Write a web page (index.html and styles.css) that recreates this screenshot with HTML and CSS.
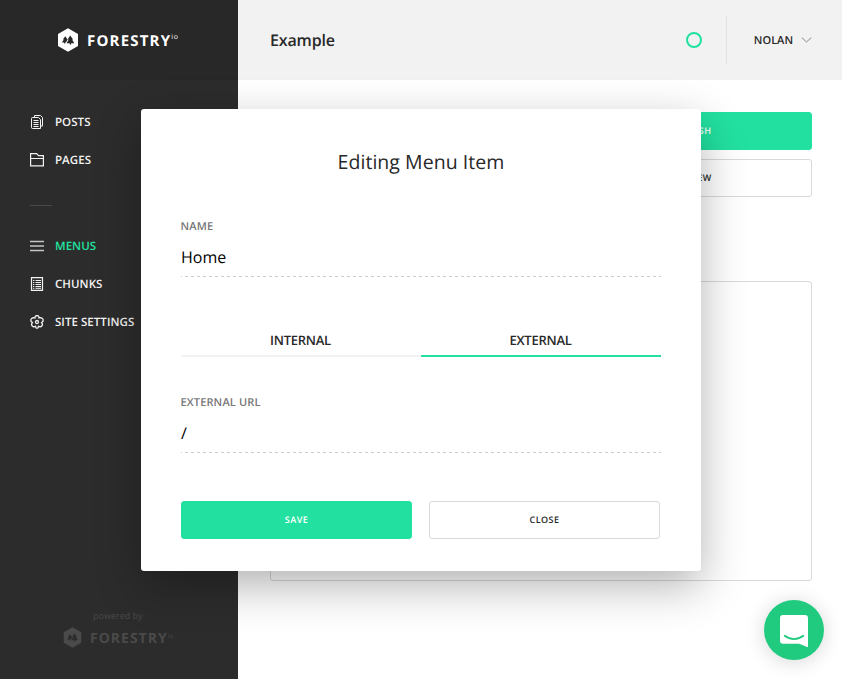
FILE: index.html
```html
<!DOCTYPE html>
<html lang="en">
<head>
<meta charset="utf-8">
<title>Forestry</title>
<link rel="stylesheet" href="styles.css">
</head>
<body>
<svg width="0" height="0" class="defs">
  <symbol id="logo" viewBox="0 0 20 24">
    <path fill="currentColor" fill-rule="evenodd" d="M10 .3 20 6v12l-10 5.700L0 18V6zM12.200 7.500 9.600 11.500l1 .1-2 3.600h3.100v1.300h1.400V15.200h3.200l-2.200-3.600 1-.1zM7.300 8.300 5 11.300l.8.1-1.900 3h2.200v1h1.200v-1.200h.8l1.400-2.600z"/>
  </symbol>
</svg>
<div class="app">
  <aside class="sidebar">
    <div class="brand"><svg class="brand-mark"><use href="#logo"/></svg><span class="brand-name">FORESTRY</span><span class="brand-io">io</span></div>
    <nav class="nav">
      <a class="nav-item"><svg viewBox="0 0 14 14" fill="none" stroke="currentColor"><path d="M4.500 2.500V.5h6l2 2v8.500h-2"/><path d="M2.500 2.500h6l2 2v9h-8a1 1 0 0 1-1-1v-9a1 1 0 0 1 1-1zM3.500 5.500h5M3.500 7.500h5M3.500 9.500h5M3.500 11.500h5"/></svg>POSTS</a>
      <a class="nav-item"><svg viewBox="0 0 14 14" fill="none" stroke="currentColor"><path d="M.6 12.900V.6h6l2 2h4.800v10.300zM.5 5.500h13" stroke-width="1.200"/></svg>PAGES</a>
      <div class="rule"></div>
      <a class="nav-item active"><svg viewBox="0 0 14 14" stroke="#c4c4c4"><path d="M0 2.500h14M0 7h14M0 11.500h14" stroke-width="1.300"/></svg>MENUS</a>
      <a class="nav-item"><svg viewBox="0 0 14 14" fill="none" stroke="currentColor"><path d="M1.500.6h11v12.800h-11z" stroke-width="1.200"/><path d="M3 3.500h1.300M5.500 3.500H11M3 5.500h1.300M5.500 5.500H11M3 7.500h1.300M5.500 7.500H11M3 9.500h1.300M5.500 9.500H11M3 11.300h1.300M5.500 11.300H11"/></svg>CHUNKS</a>
      <a class="nav-item"><svg viewBox="0 0 14 14" fill="none" stroke="currentColor" stroke-width="1.300"><path d="M4.900 3C4.900-.3 9.100-.3 9.100 3c3.200-1.100 5.900 2.300 2.500 4.500 2.200 2.900-.7 5.200-3.100 3.800-.3 2.700-2.700 2.700-3 0-2.400 1.400-5.300-.9-3.100-3.800C-1 5.300 1.700 1.900 4.900 3z"/><circle cx="7" cy="7" r="1.500"/></svg>SITE SETTINGS</a>
    </nav>
    <footer class="powered">
      <div class="powered-label">powered by</div>
      <div class="powered-brand"><svg class="brand-mark"><use href="#logo"/></svg><span class="brand-name">FORESTRY</span><span class="brand-io">io</span></div>
    </footer>
  </aside>
  <main class="main">
    <header class="topbar">
      <h1>Example</h1>
      <span class="status"></span>
      <div class="user">NOLAN<svg viewBox="0 0 11 6" fill="none" stroke="#888"><path d="m.7.5 4.800 4.500L10.300.5"/></svg></div>
    </header>
    <div class="content">
      <div class="actions">
        <button class="btn primary">PUBLISH</button>
        <button class="btn">PREVIEW</button>
      </div>
      <section class="panel"></section>
    </div>
  </main>
</div>
<div class="modal">
  <h2>Editing Menu Item</h2>
  <label class="label">NAME</label>
  <div class="field">Home</div>
  <div class="tabs"><div class="tab">INTERNAL</div><div class="tab selected">EXTERNAL</div></div>
  <label class="label">EXTERNAL URL</label>
  <div class="field">/</div>
  <div class="modal-actions"><button class="btn primary">SAVE</button><button class="btn">CLOSE</button></div>
</div>
<div class="chat"><svg viewBox="0 0 28 33"><path fill="#fff" d="M3 0h22a3 3 0 0 1 3 3v29.200c-3-.8-6-2.500-9-3.500H3a3 3 0 0 1-3-3V3a3 3 0 0 1 3-3z"/><path d="M4.700 20.800c5.500 4.300 13.100 4.300 18.600 0" fill="none" stroke="#20cb80" stroke-width="1.800" stroke-linecap="round"/></svg></div>
</body>
</html>
```
FILE: styles.css
```css
* { box-sizing: border-box; }
body { margin: 0; font-family: "Open Sans", sans-serif; color: #282828; overflow: hidden; text-rendering: geometricPrecision; }
.defs { position: absolute; }
.app { display: flex; height: 679px; }
.sidebar { width: 238px; background: #2c2c2c; color: #f2f2f2; display: flex; flex-direction: column; }
.brand { height: 80px; background: #282828; padding-left: 58px; display: flex; align-items: center; color: #fff; }
.brand-mark { width: 20px; height: 24px; }
.brand-name { font-size: 15px; font-weight: 700; letter-spacing: 1.2px; margin-left: 9px; line-height: 22px; padding-top: 1px; }
.brand-io { font-size: 7px; line-height: 8px; margin-bottom: 4px; letter-spacing: .6px; }
.nav { padding: 23px 0 0 30px; }
.nav-item { display: flex; align-items: center; gap: 11px; height: 38px; font-size: 11.5px; font-weight: 600; letter-spacing: .05px; white-space: nowrap; }
.nav-item svg { width: 14px; height: 14px; }
.nav-item.active { color: #22e1a0; }
.rule { width: 22px; height: 1px; background: #484848; margin: 26px 0 21px; }
.powered { margin-top: auto; padding: 0 0 30px 63px; color: #4a4a4a; }
.powered-label { font-size: 9px; line-height: 12px; letter-spacing: 0; margin: 0 0 4px 30px; }
.powered-brand { display: flex; align-items: center; height: 23px; }
.powered .brand-mark { width: 19px; height: 21px; }
.powered .brand-name { font-size: 14px; margin-left: 8px; letter-spacing: 1px; padding-top: 2px; }
.powered .brand-io { font-size: 6px; }
.main { flex: 1; }
.topbar { height: 80px; background: #f2f2f2; padding: 0 30px 0 32px; display: flex; align-items: center; }
.topbar h1 { margin: 0 auto 0 0; font-size: 16px; font-weight: 600; letter-spacing: -.15px; }
.status { width: 16px; height: 16px; border: 2px solid #22e1a0; border-radius: 50%; margin-right: 24px; }
.user { height: 48px; border-left: 1px solid #e1e1e1; padding-left: 27px; display: flex; align-items: center; font-size: 11px; font-weight: 600; }
.user svg { width: 11px; height: 6px; margin-left: 8px; }
.content { padding: 32px 30px 0 32px; }
.actions { width: 242px; margin-left: auto; display: grid; gap: 9px; }
.btn { height: 38px; border: 1px solid #d9d9d9; border-radius: 3px; background: #fff; color: #282828; font: 600 9px "Open Sans", sans-serif; letter-spacing: .5px; padding: 0 0 1px; text-rendering: inherit; }
.btn.primary { background: #22e1a0; border-color: #22e1a0; color: #fff; }
.panel { height: 300px; margin-top: 84px; border: 1px solid #d9d9d9; border-radius: 3px; }
.modal { position: absolute; left: 141px; top: 109px; width: 560px; height: 462px; padding: 39px 40px 32px; background: #fff; border-radius: 3px; box-shadow: 0 15px 45px rgba(0,0,0,.3); }
.modal h2 { margin: 0 0 50px; text-align: center; font-size: 19.5px; line-height: 28px; font-weight: 400; letter-spacing: .05px; }
.label { display: block; font-size: 11px; line-height: 16px; font-weight: 600; color: #777; letter-spacing: .15px; margin: -7px 0 7px -.5px; }
.field { height: 35px; font-size: 16px; line-height: 30px; color: #000; background: repeating-linear-gradient(90deg, #ccc 0 3px, transparent 3px 6px) -2px 100% / 486px 1px no-repeat; }
.tabs { display: flex; margin: 46px 0 45px; }
.tab { flex: 1; height: 34px; line-height: 34px; padding-right: 1px; text-align: center; font-size: 13px; font-weight: 600; letter-spacing: -.25px; border-bottom: 2px solid #f2f2f2; }
.tab.selected { border-color: #22e1a0; }
.modal-actions { display: grid; grid-template-columns: 231px 231px; gap: 17px; margin-top: 48px; }
.chat { position: absolute; left: 764px; top: 600px; width: 60px; height: 60px; border-radius: 50%; background: #20cb80; box-shadow: 0 2px 20px rgba(0,0,0,.16); display: flex; padding: 15px 16px; }
.chat svg { width: 28px; height: 33px; }
```
